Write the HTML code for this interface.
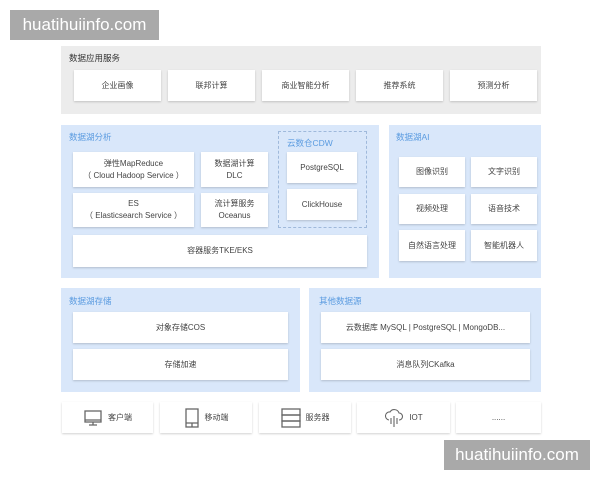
<!DOCTYPE html>
<html><head><meta charset="utf-8"><style>
*{margin:0;padding:0;box-sizing:border-box}
body{width:600px;height:480px;background:#fff;position:relative;overflow:hidden;font-family:"Liberation Sans","Noto Sans CJK SC",sans-serif;color:#444}
.a{position:absolute}
.panel{position:absolute;background:#d9e7fa}
.gray{background:#ececec}
.t{position:absolute;font-size:8.5px;color:#5a9be0;line-height:10px}
.b{position:absolute;background:#fff;box-shadow:0 1px 2px rgba(0,0,0,.18);font-size:8px;color:#444;display:flex;align-items:center;justify-content:center;text-align:center;line-height:12px}
.wm{position:absolute;background:#a9a9a9;color:#fff;font-size:17px;display:flex;align-items:center;justify-content:center}
svg{margin-right:5px}
</style></head><body>
<div class="wm" style="left:10px;top:10px;width:149px;height:30px">huatihuiinfo.com</div>
<div class="panel gray" style="left:61px;top:46px;width:480px;height:68px"></div>
<div class="t" style="left:69px;top:53px;color:#333">数据应用服务</div>
<div class="b" style="left:74px;top:70px;width:87px;height:31px">企业画像</div>
<div class="b" style="left:168px;top:70px;width:87px;height:31px">联邦计算</div>
<div class="b" style="left:262px;top:70px;width:87px;height:31px">商业智能分析</div>
<div class="b" style="left:356px;top:70px;width:87px;height:31px">推荐系统</div>
<div class="b" style="left:450px;top:70px;width:87px;height:31px">预测分析</div>

<div class="panel" style="left:61px;top:125px;width:318px;height:153px"></div>
<div class="t" style="left:69px;top:132px">数据湖分析</div>
<div class="a" style="left:278px;top:131px;width:89px;height:97px;border:1px dashed #9fb9db"></div>
<div class="t" style="left:287px;top:138px">云数仓CDW</div>
<div class="b" style="left:73px;top:152px;width:121px;height:35px">弹性MapReduce<br>（ Cloud Hadoop Service ）</div>
<div class="b" style="left:201px;top:152px;width:67px;height:35px">数据湖计算<br>DLC</div>
<div class="b" style="left:287px;top:152px;width:70px;height:31px">PostgreSQL</div>
<div class="b" style="left:73px;top:193px;width:121px;height:34px">ES<br>（ Elasticsearch Service ）</div>
<div class="b" style="left:201px;top:193px;width:67px;height:34px">流计算服务<br>Oceanus</div>
<div class="b" style="left:287px;top:189px;width:70px;height:31px">ClickHouse</div>
<div class="b" style="left:73px;top:235px;width:294px;height:32px">容器服务TKE/EKS</div>

<div class="panel" style="left:389px;top:125px;width:152px;height:153px"></div>
<div class="t" style="left:396px;top:132px">数据湖AI</div>
<div class="b" style="left:399px;top:157px;width:66px;height:30px">图像识别</div>
<div class="b" style="left:471px;top:157px;width:66px;height:30px">文字识别</div>
<div class="b" style="left:399px;top:194px;width:66px;height:30px">视频处理</div>
<div class="b" style="left:471px;top:194px;width:66px;height:30px">语音技术</div>
<div class="b" style="left:399px;top:230px;width:66px;height:31px">自然语言处理</div>
<div class="b" style="left:471px;top:230px;width:66px;height:31px">智能机器人</div>

<div class="panel" style="left:61px;top:288px;width:239px;height:104px"></div>
<div class="t" style="left:69px;top:296px">数据湖存储</div>
<div class="b" style="left:73px;top:312px;width:215px;height:31px">对象存储COS</div>
<div class="b" style="left:73px;top:349px;width:215px;height:31px">存储加速</div>
<div class="panel" style="left:309px;top:288px;width:232px;height:104px"></div>
<div class="t" style="left:319px;top:296px">其他数据源</div>
<div class="b" style="left:321px;top:312px;width:209px;height:31px">云数据库 MySQL | PostgreSQL | MongoDB...</div>
<div class="b" style="left:321px;top:349px;width:209px;height:31px">消息队列CKafka</div>

<div class="b" style="left:62px;top:402px;width:91px;height:31px"><svg width="20" height="20" viewBox="0 0 20 20" fill="none" stroke="#666" stroke-width="1.3"><rect x="2" y="3" width="16" height="11"/><path d="M2 12h16M10 14v3M6 17h8"/></svg>客户端</div>
<div class="b" style="left:160px;top:402px;width:92px;height:31px"><svg width="16" height="20" viewBox="0 0 16 20" fill="none" stroke="#666" stroke-width="1.3"><rect x="2" y="1" width="12" height="18"/><path d="M2 15h12M8 15v4"/></svg>移动端</div>
<div class="b" style="left:259px;top:402px;width:92px;height:31px"><svg width="20" height="20" viewBox="0 0 20 20" fill="none" stroke="#666" stroke-width="1.3"><rect x="1" y="1" width="18" height="6"/><rect x="1" y="7" width="18" height="6"/><rect x="1" y="13" width="18" height="6"/></svg>服务器</div>
<div class="b" style="left:357px;top:402px;width:93px;height:31px"><svg width="20" height="20" viewBox="0 0 20 20" fill="none" stroke="#666" stroke-width="1.1"><path d="M5 12a4 4 0 0 1 1-8a5 5 0 0 1 9 1a3.5 3.5 0 0 1 0 7M10 8v11M7 10v6M13 10v6"/></svg>IOT</div>
<div class="b" style="left:456px;top:402px;width:85px;height:31px">......</div>

<div class="wm" style="left:444px;top:440px;width:146px;height:30px">huatihuiinfo.com</div>
</body></html>
